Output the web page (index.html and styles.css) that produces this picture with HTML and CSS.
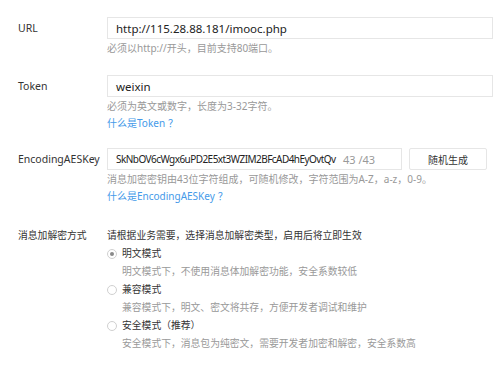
FILE: index.html
```html
<!DOCTYPE html>
<html lang="zh-CN">
<head>
<meta charset="utf-8">
<title>服务器配置</title>
<link rel="stylesheet" href="styles.css">
</head>
<body>
<div class="form">
  <div class="row row-url">
    <div class="label">URL</div>
    <div class="ctrl">
      <div class="input"><span class="val">http://115.28.88.181/imooc.php</span></div>
      <p class="tip">必须以http://开头，目前支持80端口。</p>
    </div>
  </div>
  <div class="row row-token">
    <div class="label">Token</div>
    <div class="ctrl">
      <div class="input"><span class="val">weixin</span></div>
      <p class="tip">必须为英文或数字，长度为3-32字符。</p>
      <a class="link" href="#">什么是Token<span class="q">？</span></a>
    </div>
  </div>
  <div class="row row-key">
    <div class="label">EncodingAESKey</div>
    <div class="ctrl">
      <div class="key-line">
        <div class="input input-key"><span class="val">SkNbOV6cWgx6uPD2E5xt3WZIM2BFcAD4hEyOvtQv</span><span class="count">43 /43</span></div>
        <button class="btn" type="button">随机生成</button>
      </div>
      <p class="tip">消息加密密钥由43位字符组成，可随机修改，字符范围为A-Z，a-z，0-9。</p>
      <a class="link" href="#">什么是EncodingAESKey<span class="q">？</span></a>
    </div>
  </div>
  <div class="row row-mode">
    <div class="label label-mode">消息加解密方式</div>
    <div class="ctrl">
      <p class="intro">请根据业务需要，选择消息加解密类型，启用后将立即生效</p>
      <div class="option">
        <span class="radio checked"></span><span class="opt-name">明文模式</span>
      </div>
      <p class="opt-desc">明文模式下，不使用消息体加解密功能，安全系数较低</p>
      <div class="option">
        <span class="radio"></span><span class="opt-name">兼容模式</span>
      </div>
      <p class="opt-desc">兼容模式下，明文、密文将共存，方便开发者调试和维护</p>
      <div class="option">
        <span class="radio"></span><span class="opt-name">安全模式（推荐）</span>
      </div>
      <p class="opt-desc">安全模式下，消息包为纯密文，需要开发者加密和解密，安全系数高</p>
    </div>
  </div>
</div>
</body>
</html>
```

FILE: styles.css
```css
* { box-sizing: border-box; }
html, body { margin: 0; padding: 0; background: #fff; }
body {
  font-family: "Noto Sans", "Noto Sans CJK SC", sans-serif;
  font-size: 10px;
  color: #333;
}
p { margin: 0; }
.form { padding: 17px 7px 0 18px; }
.row {
  display: grid;
  grid-template-columns: 89px 1fr;
}
.row-url { margin-bottom: 18px; }
.row-token { margin-bottom: 16px; }
.row-key { margin-bottom: 22px; }
.label {
  line-height: 22px;
  color: #333;
  font-size: 10.5px;
}
.label-mode { line-height: 18px; font-size: 9.8px; }
.ctrl { display: flex; flex-direction: column; align-items: flex-start; }
.input {
  width: 100%;
  height: 22px;
  border: 1px solid #e6e6e6;
  display: flex;
  align-items: center;
  padding: 0 8px;
  font-size: 11.5px;
  color: #222;
  white-space: nowrap;
  overflow: hidden;
}
.key-line { display: flex; width: 100%; }
.input-key {
  flex: none;
  width: 295px;
  padding-right: 7px;
  font-size: 10px;
}
.input-key .val {
  flex: none;
  width: 226px;
  overflow: hidden;
  letter-spacing: -0.55px;
}
.count { color: #999; margin-left: 1px; font-size: 11px; }
.btn {
  width: 78px;
  height: 22px;
  margin-left: 7px;
  border: 1px solid #e6e6e6;
  background: #fff;
  font-family: inherit;
  font-size: 10px;
  color: #333;
  padding: 0;
  border-radius: 2px;
}
.tip {
  margin-top: 1px;
  line-height: 17px;
  color: #999;
}
.link {
  line-height: 17px;
  color: #459ae9;
  text-decoration: none;
  font-size: 10px;
}
.q { margin-left: 3px; }
.intro { line-height: 18px; color: #333; font-size: 9.8px; }
.option {
  display: flex;
  align-items: center;
  line-height: 18px;
  font-size: 9.8px;
}
.radio {
  width: 10px;
  height: 10px;
  border: 1px solid #d0d0d0;
  border-radius: 50%;
  margin-right: 5px;
  position: relative;
  background: #fff;
}
.radio.checked::after {
  content: "";
  position: absolute;
  left: 2px;
  top: 2px;
  width: 4px;
  height: 4px;
  border-radius: 50%;
  background: #8a8a8a;
}
.opt-name { color: #333; }
.opt-desc {
  line-height: 18px;
  padding-left: 15px;
  color: #999;
  font-size: 9.8px;
}
```
